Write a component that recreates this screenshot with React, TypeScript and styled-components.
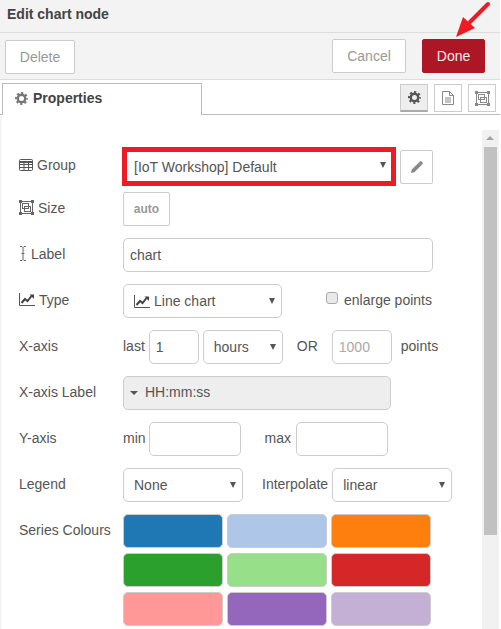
import React from 'react';
import styled, { createGlobalStyle } from 'styled-components';

const GlobalStyle = createGlobalStyle`
  html, body {
    margin: 0;
    padding: 0;
    background: #fff;
  }
  * {
    box-sizing: border-box;
  }
`;

const FONT = `"Liberation Sans", Arial, Helvetica, sans-serif`;

const Panel = styled.div`
  position: relative;
  width: 501px;
  height: 629px;
  overflow: hidden;
  display: flex;
  flex-direction: column;
  background: #fff;
  font-family: ${FONT};
  font-size: 14px;
  color: #555;
`;

const Title = styled.div`
  height: 33px;
  width: 500px;
  padding: 6px 0 0 7px;
  background: #f3f3f3;
  border-bottom: 1px solid #ddd;
  font-weight: bold;
  color: #444;
  line-height: 16px;
`;

const Toolbar = styled.div`
  height: 47px;
  width: 500px;
  padding: 6px 15px 0 5px;
  display: flex;
  align-items: flex-start;
  background: #f3f3f3;
  border-bottom: 1px solid #ddd;
`;

const ToolButton = styled.button<{ $primary?: boolean; $width: number; $left?: number; $nudge?: number }>`
  width: ${(p) => p.$width}px;
  height: 34px;
  margin-left: ${(p) => p.$left ?? 0}px;
  margin-top: ${(p) => p.$nudge ?? 0}px;
  padding: 0;
  font-family: ${FONT};
  font-size: 14px;
  border-radius: 2px;
  color: ${(p) => (p.$primary ? '#eee' : '#999')};
  background: ${(p) => (p.$primary ? '#ad1625' : '#fff')};
  border: 1px solid ${(p) => (p.$primary ? '#ad1625' : '#ccc')};
`;

const Spacer = styled.div`
  flex: 1;
`;

const TabBar = styled.div`
  height: 35px;
  width: 500px;
  padding: 3px 4px 0 2px;
  display: flex;
  align-items: flex-start;
  border-bottom: 1px solid #bbb;
`;

const Tab = styled.div`
  width: 200px;
  height: 32px;
  padding: 0 0 3px 12px;
  display: flex;
  align-items: center;
  align-self: flex-start;
  gap: 5px;
  background: #fff;
  border: 1px solid #bbb;
  border-bottom: none;
  font-weight: bold;
  color: #444;
  line-height: 16px;
`;

const TabTools = styled.div`
  margin-left: auto;
  padding-top: 1px;
  display: flex;
  gap: 6px;
`;

const TabTool = styled.div<{ $active?: boolean }>`
  width: 28px;
  height: 28px;
  display: flex;
  align-items: center;
  justify-content: center;
  color: ${(p) => (p.$active ? '#555' : '#888')};
  background: ${(p) => (p.$active ? '#eee' : '#fff')};
  border: 1px solid #ccc;
  border-bottom: ${(p) => (p.$active ? '2px solid #aaa' : '1px solid #ccc')};
`;

const Body = styled.div`
  flex: 1;
  min-height: 0;
  display: flex;
`;

const Form = styled.div`
  flex: 1;
  min-width: 0;
  padding: 35px 0 0 17px;
  border-left: 2px solid #f6f6f6;
`;

const Scrollbar = styled.div`
  width: 17px;
  margin: 15px 2px 0 0;
  padding: 17px 0 0 2px;
  position: relative;
  background: #f1f1f1;
`;

const ScrollUp = styled.div`
  position: absolute;
  left: 4px;
  top: 6px;
  width: 0;
  height: 0;
  border-left: 4px solid transparent;
  border-right: 4px solid transparent;
  border-bottom: 4px solid #a3a3a3;
`;

const ScrollThumb = styled.div`
  width: 13px;
  height: 388px;
  background: #c1c1c1;
`;

const Row = styled.div<{ $gap?: number }>`
  height: 34px;
  margin-bottom: ${(p) => p.$gap ?? 12}px;
  display: flex;
  align-items: center;
`;

const Label = styled.label<{ $lift?: number }>`
  width: 104px;
  flex: none;
  height: 34px;
  display: flex;
  align-items: center;
  gap: 4px;
  padding-bottom: ${(p) => p.$lift ?? 3}px;
  white-space: nowrap;
  color: #555;
`;

const Word = styled.span<{ $left?: number; $right?: number }>`
  margin-left: ${(p) => p.$left ?? 0}px;
  margin-right: ${(p) => p.$right ?? 0}px;
  padding-bottom: 3px;
  white-space: nowrap;
`;

const TextInput = styled.input<{ $width: number; $left?: number }>`
  width: ${(p) => p.$width}px;
  height: 34px;
  margin: 0 0 0 ${(p) => p.$left ?? 0}px;
  padding: 0 6px;
  font-family: ${FONT};
  font-size: 14px;
  color: #555;
  background: #fff;
  border: 1px solid #ccc;
  border-radius: 5px;
  outline: none;
  &::placeholder {
    color: #aaa;
    opacity: 1;
  }
`;

const SelectWrap = styled.div<{ $width: number; $left?: number }>`
  position: relative;
  flex: none;
  width: ${(p) => p.$width}px;
  height: 34px;
  margin-left: ${(p) => p.$left ?? 0}px;
`;

const NativeSelect = styled.select`
  appearance: none;
  width: 100%;
  height: 100%;
  margin: 0;
  padding: 0 20px 0 10px;
  font-family: ${FONT};
  font-size: 14px;
  color: #555;
  background: #fff;
  border: 1px solid #ccc;
  border-radius: 5px;
  outline: none;
`;

const Caret = styled.span`
  position: absolute;
  right: 7px;
  top: 14px;
  width: 0;
  height: 0;
  pointer-events: none;
  border-left: 3.5px solid transparent;
  border-right: 3.5px solid transparent;
  border-top: 6px solid #555;
`;

const GroupHighlight = styled.div`
  position: relative;
  flex: none;
  width: 274px;
  height: 39px;
  margin: -1px 0 0 -1px;
  border: 5px solid #ed1c24;
  background: #fff;
  select {
    border: none;
    border-radius: 0;
    padding-left: 7px;
  }
  span {
    right: 5px;
    top: 10px;
  }
`;

const EditButton = styled.div`
  width: 33px;
  height: 34px;
  margin-left: 4px;
  display: flex;
  align-items: center;
  justify-content: center;
  background: #fff;
  border: 1px solid #ccc;
  border-radius: 2px;
`;

const SizeButton = styled.div`
  width: 47px;
  height: 34px;
  display: flex;
  align-items: center;
  justify-content: center;
  background: #fff;
  border: 1px solid #ccc;
  border-radius: 2px;
  font-size: 12px;
  font-weight: bold;
  color: #999;
`;

const IconSelect = styled.div`
  position: relative;
  width: 159px;
  height: 34px;
  padding-left: 10px;
  display: flex;
  align-items: center;
  gap: 4px;
  background: #fff;
  border: 1px solid #ccc;
  border-radius: 5px;
  span {
    right: 6px;
    top: 13px;
  }
`;

const CheckLabel = styled.div`
  margin-left: 44px;
  display: flex;
  align-items: center;
  gap: 6px;
`;

const CheckBox = styled.span`
  width: 12px;
  height: 12px;
  margin-top: -6px;
  background: #e9e9e9;
  border: 1px solid #aaa;
  border-radius: 3px;
`;

const TypedInput = styled.div`
  position: relative;
  width: 268px;
  height: 34px;
  padding: 0 0 2px 6px;
  display: flex;
  align-items: center;
  gap: 7px;
  background: #eee;
  border: 1px solid #ccc;
  border-radius: 5px;
`;

const SmallCaret = styled.span`
  width: 0;
  height: 0;
  margin-top: 2px;
  border-left: 4px solid transparent;
  border-right: 4px solid transparent;
  border-top: 4px solid #555;
`;

const ColourGrid = styled.div`
  display: grid;
  grid-template-columns: repeat(3, 100px);
  grid-auto-rows: 34px;
  column-gap: 4px;
  row-gap: 5px;
`;

const Swatch = styled.div<{ $colour: string }>`
  background: ${(p) => p.$colour};
  border: 1px solid #ccc;
  border-radius: 5px;
`;

const ColourRow = styled.div`
  display: flex;
  align-items: flex-start;
`;

const Arrow = styled.svg`
  position: absolute;
  left: 450px;
  top: 0;
`;

const CogIcon = ({ size = 13, colour = '#777' }: { size?: number; colour?: string }) => (
  <svg width={size} height={size} viewBox="0 0 14 14" aria-hidden="true">
    <circle cx="7" cy="7" r="4" fill="none" stroke={colour} strokeWidth="2.6" />
    <circle cx="7" cy="7" r="5.9" fill="none" stroke={colour} strokeWidth="2.2" strokeDasharray="2.3 2.33" strokeDashoffset="1.15" />
  </svg>
);

const DocIcon = () => (
  <svg width="12" height="14" viewBox="0 0 12 14" aria-hidden="true">
    <path d="M.5.5h7l4 4v9H.5z M7.5.5v4h4" fill="none" stroke="currentColor" />
    <path d="M3 7h6M3 9h6M3 11h6" stroke="currentColor" />
  </svg>
);

const SizeIcon = ({ colour = '#666' }: { colour?: string }) => (
  <svg width="15" height="15" viewBox="0 0 15 15" aria-hidden="true">
    <rect x="1.5" y="1.5" width="12" height="12" fill="none" stroke={colour} />
    <rect x="3.5" y="3.5" width="6" height="5" fill="none" stroke={colour} />
    <rect x="5.5" y="6.5" width="6" height="5" fill="none" stroke={colour} />
    <path d="M0 0h3v3H0zM12 0h3v3h-3zM0 12h3v3H0zM12 12h3v3h-3z" fill={colour} />
  </svg>
);

const TableIcon = () => (
  <svg width="14" height="12" viewBox="0 0 14 12" aria-hidden="true">
    <rect x=".5" y=".5" width="13" height="11" rx="1" fill="none" stroke="#555" />
    <path d="M.5 3h13" stroke="#555" strokeWidth="2" />
    <path d="M0 5.5h14M0 8.5h14M5 3v8M9.5 3v8" stroke="#555" />
  </svg>
);

const CursorIcon = () => (
  <svg width="8" height="15" viewBox="0 0 8 15" aria-hidden="true">
    <path d="M1 .5h2l1 1 1-1h2M1 14.5h2l1-1 1 1h2M4 1.5v12M2.5 7.5h3" fill="none" stroke="#666" />
  </svg>
);

const LineChartIcon = () => (
  <svg width="16" height="13" viewBox="0 0 16 13" aria-hidden="true">
    <path d="M.5 0v12.5H16" fill="none" stroke="#555" />
    <path d="M2.5 10l3.5-4 2.5 2 4-5" fill="none" stroke="#444" strokeWidth="2" />
    <path d="M10.5 1.5H15V6z" fill="#444" />
  </svg>
);

const PencilIcon = () => (
  <svg width="12" height="12" viewBox="0 0 12 12" aria-hidden="true">
    <path d="M0 12l.8-3.4L8 1.4 10.6 4l-7.2 7.2z" fill="#888" />
    <path d="M8.8.6c.6-.6 1.2-.6 1.7-.1l1 1c.5.5.5 1.1-.1 1.7l-.9.9L7.9 1.5z" fill="#888" />
  </svg>
);

const colours = [
  '#1f77b4',
  '#aec7e8',
  '#ff7f0e',
  '#2ca02c',
  '#98df8a',
  '#d62728',
  '#ff9896',
  '#9467bd',
  '#c5b0d5',
];

const noop = () => {};

export default function App() {
  return (
    <Panel>
      <GlobalStyle />
      <Title>Edit chart node</Title>
      <Toolbar>
        <ToolButton $width={70} $nudge={1}>Delete</ToolButton>
        <Spacer />
        <ToolButton $width={74}>Cancel</ToolButton>
        <ToolButton $primary $width={63} $left={16}>Done</ToolButton>
      </Toolbar>
      <TabBar>
        <Tab>
          <CogIcon />
          Properties
        </Tab>
        <TabTools>
          <TabTool $active>
            <CogIcon colour="#555" />
          </TabTool>
          <TabTool>
            <DocIcon />
          </TabTool>
          <TabTool>
            <SizeIcon colour="#888" />
          </TabTool>
        </TabTools>
      </TabBar>
      <Body>
        <Form>
          <Row $gap={8}>
            <Label $lift={5}>
              <TableIcon />
              Group
            </Label>
            <GroupHighlight>
              <NativeSelect value="default" onChange={noop}>
                <option value="default">[IoT Workshop] Default</option>
              </NativeSelect>
              <Caret />
            </GroupHighlight>
            <EditButton>
              <PencilIcon />
            </EditButton>
          </Row>
          <Row>
            <Label>
              <SizeIcon />
              Size
            </Label>
            <SizeButton>auto</SizeButton>
          </Row>
          <Row>
            <Label>
              <CursorIcon />
              Label
            </Label>
            <TextInput $width={310} value="chart" onChange={noop} />
          </Row>
          <Row>
            <Label>
              <LineChartIcon />
              Type
            </Label>
            <IconSelect>
              <LineChartIcon />
              Line chart
              <Caret />
            </IconSelect>
            <CheckLabel>
              <CheckBox />
              <Word>enlarge points</Word>
            </CheckLabel>
          </Row>
          <Row>
            <Label>X-axis</Label>
            <Word $right={4}>last</Word>
            <TextInput $width={50} value="1" onChange={noop} />
            <SelectWrap $width={80} $left={4}>
              <NativeSelect value="hours" onChange={noop}>
                <option value="hours">hours</option>
              </NativeSelect>
              <Caret />
            </SelectWrap>
            <Word $left={14}>OR</Word>
            <TextInput $width={60} $left={14} placeholder="1000" />
            <Word $left={9}>points</Word>
          </Row>
          <Row>
            <Label>X-axis Label</Label>
            <TypedInput>
              <SmallCaret />
              HH:mm:ss
            </TypedInput>
          </Row>
          <Row>
            <Label>Y-axis</Label>
            <Word $right={3}>min</Word>
            <TextInput $width={92} />
            <Word $left={24} $right={5}>max</Word>
            <TextInput $width={92} />
          </Row>
          <Row>
            <Label>Legend</Label>
            <SelectWrap $width={120}>
              <NativeSelect value="none" onChange={noop}>
                <option value="none">None</option>
              </NativeSelect>
              <Caret />
            </SelectWrap>
            <Word $left={19} $right={4}>Interpolate</Word>
            <SelectWrap $width={120}>
              <NativeSelect value="linear" onChange={noop}>
                <option value="linear">linear</option>
              </NativeSelect>
              <Caret />
            </SelectWrap>
          </Row>
          <ColourRow>
            <Label>Series Colours</Label>
            <ColourGrid>
              {colours.map((colour) => (
                <Swatch key={colour} $colour={colour} />
              ))}
            </ColourGrid>
          </ColourRow>
        </Form>
        <Scrollbar>
          <ScrollUp />
          <ScrollThumb />
        </Scrollbar>
      </Body>
      <Arrow width="45" height="42" viewBox="0 0 45 42" aria-hidden="true">
        <path d="M38 4L20 22" stroke="#ed1c24" strokeWidth="4" strokeLinecap="round" fill="none" />
        <path d="M6 37L13 17L25 28z" fill="#ed1c24" />
      </Arrow>
    </Panel>
  );
}
